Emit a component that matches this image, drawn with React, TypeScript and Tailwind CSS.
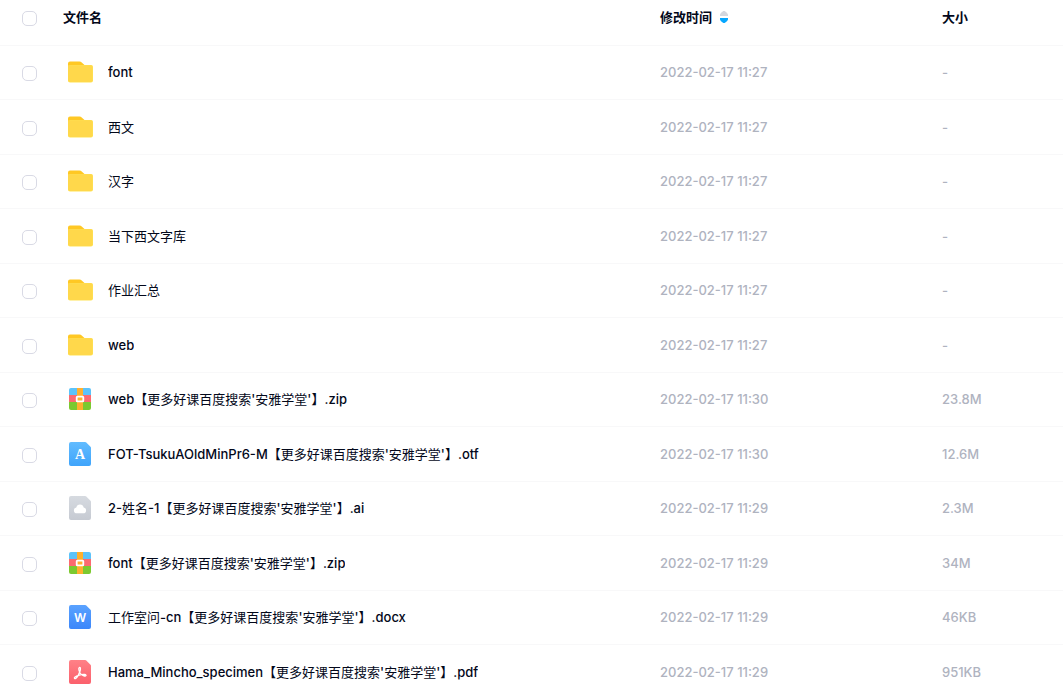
type FileKind = "folder" | "zip" | "otf" | "ai" | "docx" | "pdf";

type FileItem = {
  name: string;
  kind: FileKind;
  modified: string;
  size: string;
};

const files: FileItem[] = [
  { name: "font", kind: "folder", modified: "2022-02-17 11:27", size: "-" },
  { name: "西文", kind: "folder", modified: "2022-02-17 11:27", size: "-" },
  { name: "汉字", kind: "folder", modified: "2022-02-17 11:27", size: "-" },
  { name: "当下西文字库", kind: "folder", modified: "2022-02-17 11:27", size: "-" },
  { name: "作业汇总", kind: "folder", modified: "2022-02-17 11:27", size: "-" },
  { name: "web", kind: "folder", modified: "2022-02-17 11:27", size: "-" },
  { name: "web【更多好课百度搜索'安雅学堂'】.zip", kind: "zip", modified: "2022-02-17 11:30", size: "23.8M" },
  { name: "FOT-TsukuAOldMinPr6-M【更多好课百度搜索'安雅学堂'】.otf", kind: "otf", modified: "2022-02-17 11:30", size: "12.6M" },
  { name: "2-姓名-1【更多好课百度搜索'安雅学堂'】.ai", kind: "ai", modified: "2022-02-17 11:29", size: "2.3M" },
  { name: "font【更多好课百度搜索'安雅学堂'】.zip", kind: "zip", modified: "2022-02-17 11:29", size: "34M" },
  { name: "工作室问-cn【更多好课百度搜索'安雅学堂'】.docx", kind: "docx", modified: "2022-02-17 11:29", size: "46KB" },
  { name: "Hama_Mincho_specimen【更多好课百度搜索'安雅学堂'】.pdf", kind: "pdf", modified: "2022-02-17 11:29", size: "951KB" },
];

const sheetColors = {
  otf: ["#62bcff", "#3fa4fb"],
  ai: ["#d6dae0", "#c6cad2"],
  docx: ["#5aa2ff", "#3c87fa"],
  pdf: ["#ff8187", "#fb606c"],
};

function FolderIcon() {
  return (
    <>
      <path d="M3 6.500a2 2 0 0 1 2-2h9.500c1 0 1.600.3 2.200.9L19.500 8v4H3z" fill="#ffc824" />
      <path d="M3 9.500 5 8h21a2 2 0 0 1 2 2v13.500a2 2 0 0 1-2 2H5a2 2 0 0 1-2-2z" fill="#ffe454" />
      <path d="M3 8.200h23a1.500 1.500 0 0 1 1.500 1.500v13.500a1.800 1.800 0 0 1-1.800 1.800H5a2 2 0 0 1-2-2z" fill="#ffd84b" />
    </>
  );
}

function ZipIcon() {
  return (
    <>
      <path d="M4 6a2 2 0 0 1 2-2h18a2 2 0 0 1 2 2v5.500H4z" fill="#5cc3fa" />
      <path d="M4 11h22v7H4z" fill="#fc6a70" />
      <path d="M4 18h22v6a2 2 0 0 1-2 2H6a2 2 0 0 1-2-2z" fill="#7cc930" />
      <path d="M12 4h6v22h-6z" fill="#ffb02e" />
      <rect x="11.700" y="12.700" width="6.600" height="4.600" rx="0.600" fill="#ffb02e" stroke="#fff" strokeWidth="1.800" />
    </>
  );
}

function SheetIcon({ kind }: { kind: "otf" | "ai" | "docx" | "pdf" }) {
  const [top, bottom] = sheetColors[kind];
  return (
    <>
      <defs>
        <linearGradient id={`sheet-${kind}`} x1="0" y1="0" x2="0" y2="1">
          <stop offset="0" stopColor={top} />
          <stop offset="1" stopColor={bottom} />
        </linearGradient>
      </defs>
      <path
        d="M4 5a2 2 0 0 1 2-2h14.200a1.500 1.500 0 0 1 1.100.5l4.200 4.200a1.500 1.500 0 0 1 .5 1.100V25a2 2 0 0 1-2 2H6a2 2 0 0 1-2-2z"
        fill={`url(#sheet-${kind})`}
      />
      {kind === "otf" && (
        <text x="15" y="20" textAnchor="middle" fill="#fff" className="font-['Liberation_Serif',serif] text-[14px] font-bold">
          A
        </text>
      )}
      {kind === "ai" && (
        <path d="M11.800 20.300a2.900 2.900 0 0 1-.5-5.750 3.800 3.800 0 0 1 7.400 0 2.900 2.900 0 0 1-.5 5.750z" fill="#fff" />
      )}
      {kind === "docx" && (
        <text x="15" y="20" textAnchor="middle" fill="#fff" className="font-['Inter',sans-serif] text-[12px] font-semibold">
          W
        </text>
      )}
      {kind === "pdf" && (
        <path
          d="M14.300 10.500c1.300-.6 1.400 1.500.7 3.700-.9 2.800-2.700 6-4.300 7.200-1 .7-1.900-.3-.9-1.300 1.800-1.700 6.800-3 10-2.600 1.900.2 1.500 1.900-.2 1.500-2.300-.5-5-3-5.600-5.700-.3-1.200-.4-2.400.3-2.800z"
          fill="none"
          stroke="#fff"
          strokeWidth="1.300"
          strokeLinejoin="round"
        />
      )}
    </>
  );
}

function FileIcon({ kind }: { kind: FileKind }) {
  return (
    <svg className="size-[30px] shrink-0" viewBox="0 0 30 30" aria-hidden="true">
      {kind === "folder" ? <FolderIcon /> : kind === "zip" ? <ZipIcon /> : <SheetIcon kind={kind} />}
    </svg>
  );
}

// Latin runs are set one weight heavier than the Chinese ones
function FileName({ name }: { name: string }) {
  return (
    <span className="truncate">
      {name.split(/([\x20-\x7e]+)/).map((part, i) =>
        i % 2 ? (
          <span key={i} className="font-medium">
            {part}
          </span>
        ) : (
          part
        ),
      )}
    </span>
  );
}

function Checkbox({ label }: { label: string }) {
  return (
    <input
      type="checkbox"
      aria-label={label}
      className="block size-[15px] appearance-none rounded-[5px] border border-[#d9dae5] bg-white checked:border-[#06a7ff] checked:bg-[#06a7ff]"
    />
  );
}

function SortIcon() {
  return (
    <svg className="h-3 w-2" viewBox="0 0 8 12" aria-hidden="true">
      <path d="M0 5V3.800C0 2.800 2.400 0 4 0s4 2.800 4 3.800V5z" fill="#d4d7de" />
      <path d="M0 7v1.200c0 1 2.400 3.800 4 3.800s4-2.800 4-3.800V7z" fill="#06a7ff" />
    </svg>
  );
}

export default function App() {
  return (
    <main className="min-h-screen overflow-hidden bg-white font-['Inter','Noto_Sans_CJK_SC',sans-serif] text-[13px] leading-5 text-[#03081a]">
      <table className="w-full table-fixed border-separate border-spacing-0 text-left">
        <colgroup>
          <col className="w-[63px]" />
          <col />
          <col className="w-[282px]" />
          <col className="w-[121px]" />
        </colgroup>
        <thead>
          <tr className="h-[46px] *:border-b *:border-[#f8f8f9] *:p-0 *:align-top *:font-bold">
            <th>
              <div className="pt-[11px] pl-[22px]">
                <Checkbox label="全选" />
              </div>
            </th>
            <th>
              <div className="pt-[7px]">文件名</div>
            </th>
            <th>
              <button type="button" className="flex items-center gap-2 pt-[7px] font-bold">
                修改时间
                <SortIcon />
              </button>
            </th>
            <th>
              <div className="pt-[7px]">大小</div>
            </th>
          </tr>
        </thead>
        <tbody>
          {files.map((file) => (
            <tr
              key={file.name}
              className="h-[54px] *:border-b *:border-[#f8f8f9] *:p-0 *:align-middle even:h-[55px] hover:bg-[#fafafc]"
            >
              <td>
                <div className="pt-0.5 pl-[22px]">
                  <Checkbox label={file.name} />
                </div>
              </td>
              <td>
                <a href="#" className="flex items-center gap-[13px] pb-px pl-0.5">
                  <FileIcon kind={file.kind} />
                  <FileName name={file.name} />
                </a>
              </td>
              <td>
                <div className="pb-px font-medium text-[#afb3bf]">{file.modified}</div>
              </td>
              <td>
                <div className="pb-px font-medium text-[#afb3bf]">{file.size}</div>
              </td>
            </tr>
          ))}
        </tbody>
      </table>
    </main>
  );
}
